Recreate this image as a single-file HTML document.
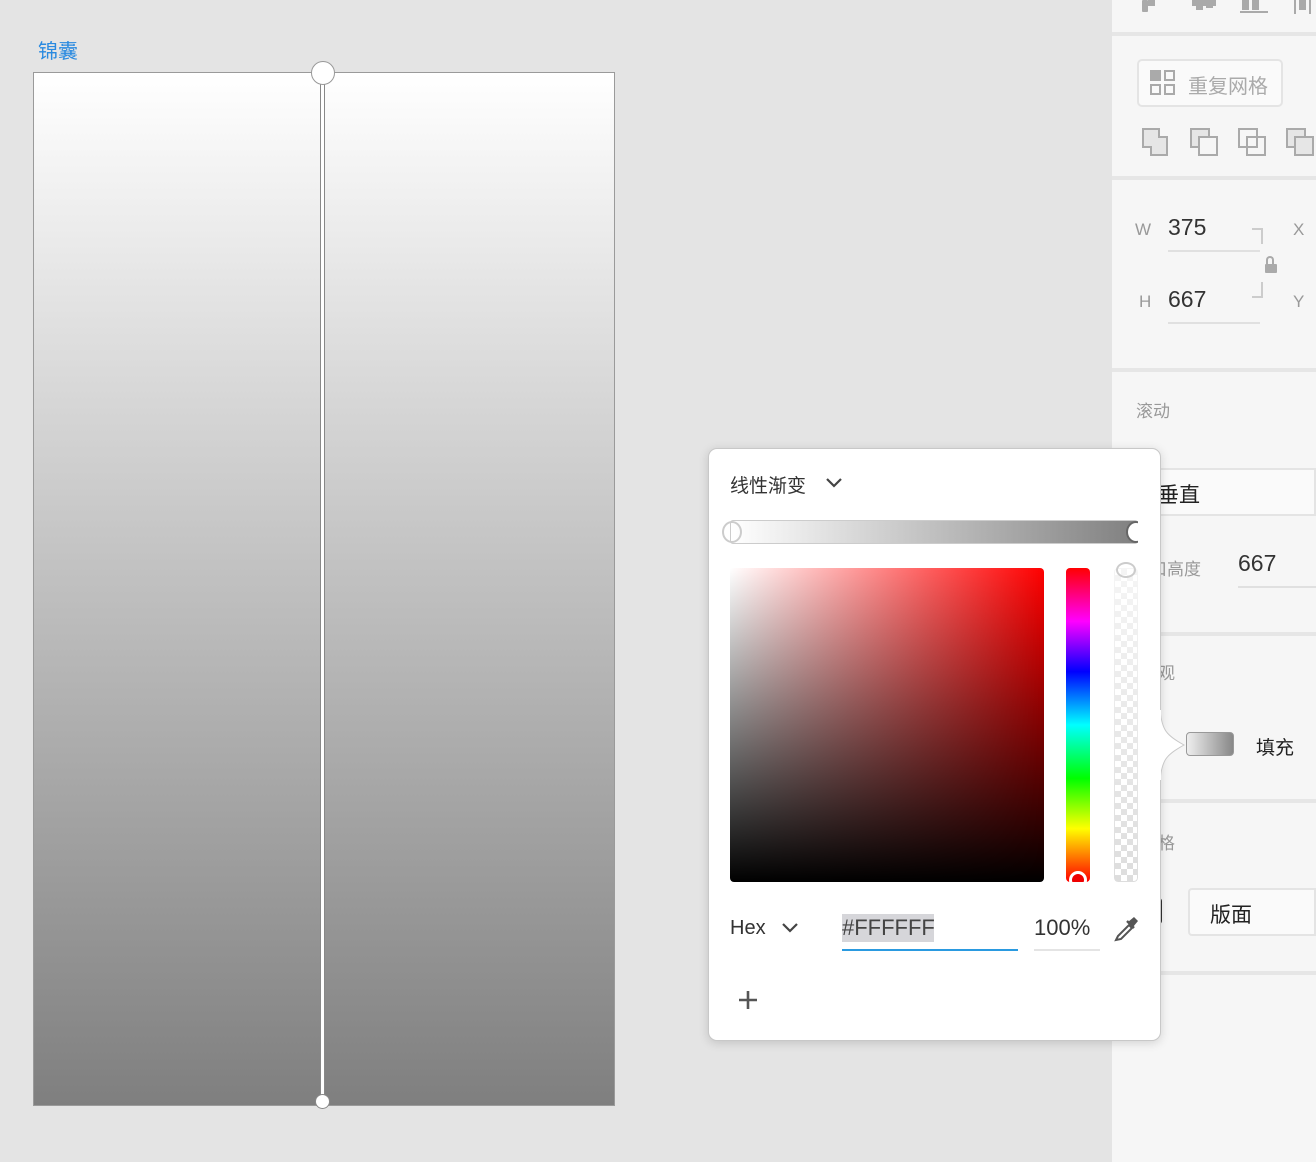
<!DOCTYPE html>
<html><head><meta charset="utf-8"><style>
*{margin:0;padding:0;box-sizing:border-box}
body{width:1316px;height:1162px;background:#e4e4e4;position:relative;overflow:hidden;font-family:"Liberation Sans","Noto Sans CJK SC",sans-serif}
.a{position:absolute}
.panel{left:1112px;top:0;width:204px;height:1162px;background:#f6f6f6}
.div{left:1112px;width:204px;height:4px;background:#e6e6e6}
.t{color:#333}
</style></head><body>
<div class="a" style="left:38px;top:35px;font-size:20px;color:#2a8ae0">锦囊</div>
<div class="a" style="left:33px;top:72px;width:582px;height:1034px;border:1px solid #9a9a9a;background:linear-gradient(#fff,#7f7f7f)"></div>
<div class="a" style="left:320px;top:73px;width:5px;height:1029px;background:#fff;border-left:1.5px solid #888;border-right:1.5px solid #888"></div>
<div class="a" style="left:311px;top:61px;width:24px;height:24px;border-radius:50%;background:#fff;border:1.5px solid #999"></div>
<div class="a" style="left:315px;top:1094px;width:15px;height:15px;border-radius:50%;background:#fff;border:1.5px solid #888"></div>

<div class="a panel"></div>
<div class="a div" style="top:32px"></div>
<div class="a div" style="top:176px"></div>
<div class="a div" style="top:368px"></div>
<div class="a div" style="top:632px"></div>
<div class="a div" style="top:799px"></div>
<div class="a div" style="top:971px"></div>
<svg class="a" style="left:1140px;top:0" width="176" height="14"><g fill="#aaa"><rect x="2" y="0" width="6" height="12" rx="1"/><rect x="8" y="0" width="7" height="6"/><rect x="52" y="0" width="24" height="6"/><rect x="56" y="0" width="7" height="10"/><rect x="66" y="0" width="7" height="8"/><rect x="102" y="0" width="7" height="10"/><rect x="112" y="0" width="7" height="10"/><rect x="100" y="11" width="28" height="2"/><rect x="154" y="0" width="2" height="14"/><rect x="159" y="0" width="7" height="10"/><rect x="169" y="0" width="2" height="14"/></g></svg>
<div class="a" style="left:1137px;top:59px;width:146px;height:48px;border:2px solid #e4e4e4;border-radius:5px;background:#fafafa"></div>
<svg class="a" style="left:1150px;top:70px" width="26" height="26"><rect x="1" y="1" width="9" height="9" fill="#aaa"/><g fill="none" stroke="#aaa" stroke-width="2"><rect x="1" y="1" width="9" height="9"/><rect x="15" y="1" width="9" height="9"/><rect x="1" y="15" width="9" height="9"/><rect x="15" y="15" width="9" height="9"/></g></svg>
<div class="a" style="left:1188px;top:70px;font-size:20px;color:#aaa">重复网格</div>
<svg class="a" style="left:1140px;top:126px" width="176" height="32"><g fill="#e6e6e6" stroke="#aaa" stroke-width="2"><path d="M3 3h16v8h8v18H11v-8H3z"/><rect x="51" y="3" width="18" height="18"/><rect x="59" y="11" width="18" height="18" fill="#f6f6f6"/><rect x="99" y="3" width="18" height="18" fill="#f6f6f6"/><rect x="107" y="11" width="18" height="18" fill="none"/><rect x="147" y="3" width="18" height="18"/><rect x="155" y="11" width="18" height="18"/></g></svg>
<div class="a" style="left:1135px;top:220px;font-size:17px;color:#999">W</div>
<div class="a t" style="left:1168px;top:214px;font-size:23px">375</div>
<div class="a" style="left:1168px;top:250px;width:92px;height:2px;background:#e0e0e0"></div>
<div class="a" style="left:1293px;top:220px;font-size:17px;color:#999">X</div>
<div class="a" style="left:1139px;top:292px;font-size:17px;color:#999">H</div>
<div class="a t" style="left:1168px;top:286px;font-size:23px">667</div>
<div class="a" style="left:1168px;top:322px;width:92px;height:2px;background:#e0e0e0"></div>
<div class="a" style="left:1293px;top:292px;font-size:17px;color:#999">Y</div>
<div class="a" style="left:1252px;top:228px;width:11px;height:16px;border-top:2px solid #ccc;border-right:2px solid #ccc"></div>
<div class="a" style="left:1252px;top:282px;width:11px;height:16px;border-bottom:2px solid #ccc;border-right:2px solid #ccc"></div>
<div class="a" style="left:1265px;top:264px;width:12px;height:9px;background:#aaa;border-radius:1px"></div>
<div class="a" style="left:1266px;top:256px;width:8px;height:10px;border:2px solid #aaa;border-bottom:none;border-radius:4px 4px 0 0"></div>
<div class="a" style="left:1136px;top:397px;font-size:17px;color:#999">滚动</div>
<div class="a" style="left:1140px;top:468px;width:176px;height:48px;border:2px solid #e4e4e4;background:#fafafa"></div>
<div class="a t" style="left:1158px;top:479px;font-size:21px;color:#222">垂直</div>
<div class="a" style="left:1150px;top:555px;font-size:17px;color:#999">口高度</div>
<div class="a t" style="left:1238px;top:550px;font-size:23px">667</div>
<div class="a" style="left:1238px;top:586px;width:78px;height:2px;background:#e0e0e0"></div>
<div class="a" style="left:1158px;top:659px;font-size:17px;color:#999">观</div>
<div class="a" style="left:1186px;top:732px;width:48px;height:24px;border-radius:4px;border:1px solid #999;background:linear-gradient(90deg,#eee,#888)"></div>
<div class="a" style="left:1256px;top:733px;font-size:19px;color:#222">填充</div>
<div class="a" style="left:1158px;top:829px;font-size:17px;color:#999">格</div>
<div class="a" style="left:1188px;top:888px;width:128px;height:48px;border:2px solid #e4e4e4;border-radius:4px 0 0 4px;background:#fafafa"></div>
<div class="a t" style="left:1210px;top:899px;font-size:21px;color:#222">版面</div>
<div class="a" style="left:1152px;top:898px;width:10px;height:26px;background:#333;border-radius:0 3px 3px 0"></div>

<div class="a" style="left:708px;top:448px;width:453px;height:593px;background:#fff;border-radius:9px;border:1px solid #c8c8c8;box-shadow:0 2px 10px rgba(0,0,0,.15)"></div>
<svg class="a" style="left:1158px;top:710px" width="30" height="70"><path d="M2 0 C4 20 8 25 26 35 C8 45 4 50 2 70 Z" fill="#fff" stroke="#c8c8c8"/><rect x="0" y="0" width="3" height="70" fill="#fff"/></svg>
<div class="a t" style="left:730px;top:471px;font-size:19px">线性渐变</div>
<svg class="a" style="left:825px;top:476px" width="18" height="14"><path d="M2 3l7 7 7-7" fill="none" stroke="#444" stroke-width="2.2"/></svg>
<div class="a" style="left:730px;top:520px;width:408px;height:24px;border-radius:3px;background:linear-gradient(90deg,#fff,#808080);border:1px solid #ccc"></div>
<div class="a" style="left:722px;top:521px;width:20px;height:22px;border-radius:50%;border:2px solid #ccc;background:transparent"></div>
<div class="a" style="left:1126px;top:521px;width:20px;height:22px;border-radius:50%;border:2px solid #666;background:#fff"></div>
<div class="a" style="left:1138px;top:518px;width:20px;height:28px;background:#fff"></div>
<div class="a" style="left:730px;top:568px;width:314px;height:314px;border-radius:4px;background:linear-gradient(transparent,#000),linear-gradient(90deg,#fff,#f00)"></div>
<div class="a" style="left:1066px;top:568px;width:24px;height:314px;border-radius:4px;background:linear-gradient(#f00,#f0f 17%,#00f 33%,#0ff 50%,#0f0 67%,#ff0 83%,#f00)"></div>
<div class="a" style="left:1069px;top:871px;width:18px;height:18px;border-radius:50%;border:3px solid #fff;background:#e00"></div>
<div class="a" style="left:1066px;top:882px;width:24px;height:10px;background:#fff"></div>
<div class="a" style="left:1114px;top:568px;width:24px;height:314px;border-radius:4px;border:1px solid #ddd;background:repeating-conic-gradient(#ddd 0 25%,#fff 0 50%) 0 0/12px 12px;-webkit-mask:linear-gradient(rgba(0,0,0,.3),#000)"></div>
<div class="a" style="left:1116px;top:562px;width:20px;height:16px;border-radius:50%;border:2px solid #ccc"></div>
<div class="a t" style="left:730px;top:917px;font-size:20px">Hex</div>
<svg class="a" style="left:781px;top:921px" width="18" height="14"><path d="M2 3l7 7 7-7" fill="none" stroke="#444" stroke-width="2.2"/></svg>
<div class="a" style="left:842px;top:914px;width:92px;height:28px;background:#d6d6da"></div>
<div class="a" style="left:842px;top:915px;font-size:22px;color:#444">#FFFFFF</div>
<div class="a" style="left:842px;top:949px;width:176px;height:2px;background:#2a9ae0"></div>
<div class="a t" style="left:1034px;top:915px;font-size:22px">100%</div>
<div class="a" style="left:1034px;top:949px;width:66px;height:2px;background:#e4e4e4"></div>
<svg class="a" style="left:1112px;top:914px" width="28" height="30"><path d="M4 26l2-4 11-11 3 3-11 11z" fill="none" stroke="#555" stroke-width="2"/><path d="M16 8l6-5 4 4-5 6z" fill="#555"/><path d="M15 7l7 7" stroke="#555" stroke-width="2.4"/></svg>
<svg class="a" style="left:737px;top:989px" width="22" height="22"><path d="M11 2v18M2 11h18" stroke="#555" stroke-width="2.6"/></svg>
</body></html>
